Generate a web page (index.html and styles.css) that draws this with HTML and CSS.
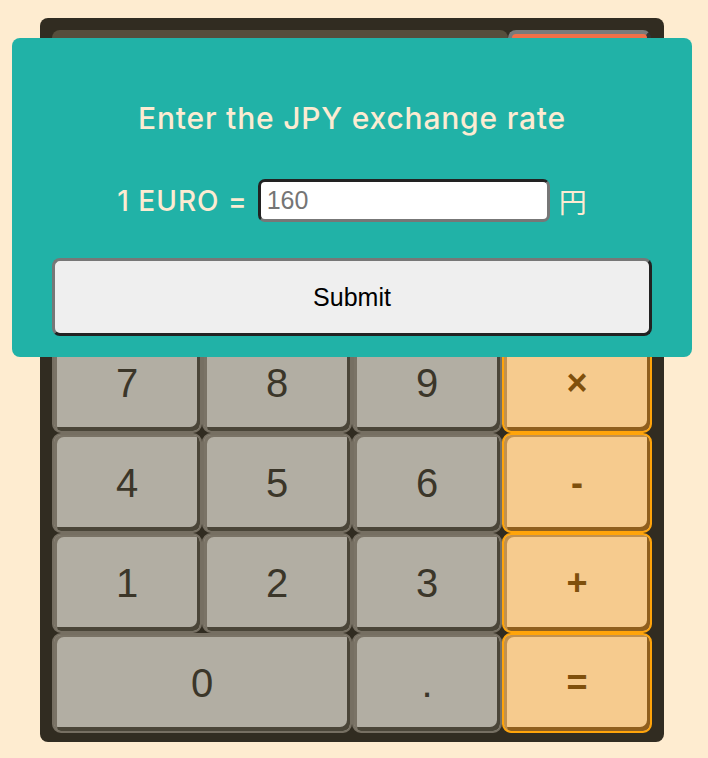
FILE: index.html
```html
<!DOCTYPE html>
<html lang="en">
<head>
<meta charset="utf-8">
<title>Currency Calculator</title>
<link rel="stylesheet" href="styles.css">
</head>
<body>
<div class="calc">
  <div class="display-row">
    <div class="display"></div>
    <button class="clear">C</button>
  </div>
  <button class="key op">÷</button>
  <button class="key">%</button>
  <button class="key">±</button>
  <button class="key op">⌫</button>

  <button class="key">7</button>
  <button class="key">8</button>
  <button class="key">9</button>
  <button class="key op">×</button>

  <button class="key">4</button>
  <button class="key">5</button>
  <button class="key">6</button>
  <button class="key op">-</button>

  <button class="key">1</button>
  <button class="key">2</button>
  <button class="key">3</button>
  <button class="key op">+</button>

  <button class="key wide">0</button>
  <button class="key">.</button>
  <button class="key op">=</button>
</div>

<div class="modal">
  <h2 class="modal-title">Enter the JPY exchange rate</h2>
  <div class="rate-row">
    <span class="rate-label">1 EURO =</span>
    <input class="rate-input" type="text" placeholder="160">
    <span class="rate-unit">円</span>
  </div>
  <button class="submit">Submit</button>
</div>
</body>
</html>
```

FILE: styles.css
```css
* { box-sizing: border-box; }

body {
  margin: 0;
  background: #feecd0;
  position: relative;
  width: 708px;
  height: 758px;
  overflow: hidden;
  font-family: "Liberation Sans", Arial, sans-serif;
}

.calc {
  margin: 18px 0 0 40px;
  width: 624px;
  height: 724px;
  padding: 12px 12px 9px 12px;
  background: #312c21;
  border-radius: 8px;
  display: grid;
  grid-template-columns: repeat(4, 150px);
  grid-template-rows: 203px repeat(5, 100px);
}

.display-row {
  grid-column: 1 / 5;
  display: flex;
  padding-bottom: 8px;
}

.display {
  flex: 1;
  background: #564e3c;
  border-radius: 8px;
}

.clear {
  width: 143px;
  margin-right: 1px;
  background: #f07048;
  border: 4px solid;
  border-color: #7a7a7a #333 #333 #7a7a7a;
  border-radius: 8px;
  font: 36px "Liberation Sans", Arial, sans-serif;
  color: #fff;
}

.key {
  border: 2px solid #766f62;
  border-radius: 9px;
  background: #b2aea3;
  box-shadow: inset 3px 2px 0 #7a7366, inset -3px -4px 0 #4a4538;
  font: 40px "Liberation Sans", Arial, sans-serif;
  color: #3b3629;
  padding: 0;
  margin: 0;
}

.key.op {
  border-color: #ffa40a;
  background: #f6cb8e;
  box-shadow: inset 3px 2px 0 #c1914f, inset -3px -4px 0 #8f5f1e;
  color: #7f500c;
  font-weight: 700;
  font-size: 36px;
}

.key.wide { grid-column: span 2; }

.modal {
  position: absolute;
  left: 12px;
  top: 38px;
  width: 680px;
  height: 319px;
  background: #21b2a7;
  border-radius: 8px;
  padding: 62px 40px 0 40px;
  display: flex;
  flex-direction: column;
  align-items: center;
}

.modal-title {
  margin: 0;
  height: 36px;
  font: 500 30px/36px Inter, "Noto Sans", sans-serif;
  letter-spacing: 0.8px;
  color: #fcebd2;
}

.rate-row {
  margin-top: 43px;
  display: flex;
  align-items: center;
  height: 43px;
  color: #fcebd2;
  font: 500 28px Inter, "Noto Sans", "Noto Sans CJK JP", sans-serif;
}

.rate-label { margin-right: 10px; letter-spacing: 1px; }
.rate-unit { margin-left: 9px; font-family: "Noto Sans CJK JP", sans-serif; font-weight: 400; }

.rate-input {
  width: 292px;
  height: 43px;
  border: 3px solid;
  border-color: #222 #777 #777 #222;
  border-radius: 7px;
  padding: 0 6px;
  background: #fff;
  font: 25px "Liberation Sans", Arial, sans-serif;
  color: #222;
}
.rate-input::placeholder { color: #757575; }

.submit {
  margin-top: 36px;
  width: 600px;
  height: 78px;
  background: #efefef;
  border: 3px solid;
  border-color: #777 #222 #222 #777;
  border-radius: 8px;
  font: 25px "Liberation Sans", Arial, sans-serif;
  color: #000;
}
```
